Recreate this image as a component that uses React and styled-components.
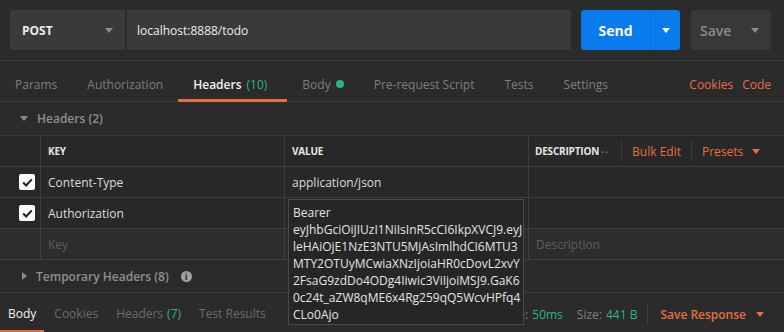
import React from 'react';
import styled, { createGlobalStyle } from 'styled-components';

const GlobalStyle = createGlobalStyle`
    html, body {
        margin: 0;
        padding: 0;
        background: #2b2b2b;
    }
    body {
        font-family: "Open Sans", "Noto Sans", sans-serif;
        -webkit-font-smoothing: antialiased;
    }
`;

const ORANGE = '#e5703f';
const GREEN = '#2fb383';
const LINE = '#3e3e3e';

const Page = styled.div`
    position: relative;
    width: 784px;
    height: 332px;
    overflow: hidden;
    background: #2b2b2b;
    color: #d8d8d8;
    font-size: 12px;
`;

const TopBar = styled.div`
    display: flex;
    height: 40px;
    padding: 10px 13px 10px 10px;
    border-bottom: 1px solid ${LINE};
`;

const Method = styled.div`
    display: flex;
    align-items: center;
    justify-content: space-between;
    width: 115px;
    padding: 0 12px 0 12px;
    box-sizing: border-box;
    background: #3a3a3a;
    border-radius: 3px 0 0 3px;
    color: #ececec;
    font-weight: 700;
    font-size: 12px;
`;

const Url = styled.div`
    flex: 1;
    display: flex;
    align-items: center;
    margin-left: 2px;
    padding-left: 10px;
    background: #3a3a3a;
    border-radius: 0 3px 3px 0;
    color: #ececec;
    font-size: 12px;
`;

const Caret = styled.span`
    width: 0;
    height: 0;
    border-left: 4px solid transparent;
    border-right: 4px solid transparent;
    border-top: 5px solid ${p => p.$color || '#8a8a8a'};
    display: inline-block;
`;

const SendButton = styled.div`
    display: flex;
    margin-left: 10px;
    width: 99px;
    background: #097bed;
    border-radius: 3px;
    color: #fff;
    font-weight: 700;
    font-size: 14px;
`;

const SendLabel = styled.div`
    flex: 1;
    display: flex;
    align-items: center;
    justify-content: center;
    border-right: 1px solid #0a6fd6;
`;

const SendArrow = styled.div`
    width: 29px;
    display: flex;
    align-items: center;
    justify-content: center;
`;

const SaveButton = styled.div`
    display: flex;
    align-items: center;
    justify-content: space-between;
    margin-left: 11px;
    width: 80px;
    padding: 0 12px 0 9px;
    box-sizing: border-box;
    background: #383838;
    border-radius: 3px;
    color: #8c8c8c;
    font-weight: 600;
    font-size: 14px;
`;

const TabBar = styled.div`
    display: flex;
    align-items: stretch;
    height: 40px;
    border-bottom: 1px solid ${LINE};
`;

const Tab = styled.div`
    display: flex;
    align-items: center;
    gap: 5px;
    padding: 8px ${p => (p.$active ? '20px' : '15px')} 0 15px;
    color: ${p => (p.$active ? '#f2f2f2' : '#7e7e7e')};
    font-weight: ${p => (p.$active ? 600 : 400)};
    border-bottom: 3px solid ${p => (p.$active ? ORANGE : 'transparent')};
    margin-bottom: -1px;
    white-space: nowrap;
`;

const Count = styled.span`
    color: ${GREEN};
    font-weight: 400;
`;

const Dot = styled.span`
    width: 8px;
    height: 8px;
    border-radius: 50%;
    background: ${GREEN};
    display: inline-block;
`;

const TabLinks = styled.div`
    margin-left: auto;
    display: flex;
    align-items: center;
    gap: 9px;
    padding: 6px 13px 0 0;
    color: ${ORANGE};
`;

const SectionTitle = styled.div`
    display: flex;
    align-items: center;
    gap: 9px;
    height: 33px;
    padding-left: 20px;
    color: #8f8f8f;
    font-weight: 600;
    border-bottom: 1px solid ${LINE};
`;

const Arrow = styled.span`
    width: 0;
    height: 0;
    display: inline-block;
    ${p => (p.$open
        ? `border-left: 4px solid transparent; border-right: 4px solid transparent; border-top: 5px solid #8a8a8a;`
        : `border-top: 4px solid transparent; border-bottom: 4px solid transparent; border-left: 5px solid #8a8a8a;`)}
`;

const Row = styled.div`
    display: grid;
    grid-template-columns: 40px 244px 244px 1fr;
    height: 30px;
    border-bottom: 1px solid ${LINE};
    background: ${p => (p.$tint ? '#2d2d2d' : '#282828')};
`;

const Cell = styled.div`
    display: flex;
    align-items: center;
    padding-left: ${p => p.$pad ?? 7}px;
    border-left: ${p => (p.$noLine ? 'none' : `1px solid ${LINE}`)};
    color: ${p => (p.$muted ? '#5e5e5e' : '#dcdcdc')};
    white-space: nowrap;
    overflow: hidden;
`;

const HeadCell = styled(Cell)`
    font-size: 10px;
    font-weight: 700;
    color: #e6e6e6;
    letter-spacing: -0.2px;
`;

const CheckCell = styled.div`
    display: flex;
    align-items: center;
    justify-content: flex-end;
    padding-right: 5px;
`;

const Check = styled.div`
    width: 16px;
    height: 16px;
    border-radius: 2px;
    background: #fafafa;
    display: flex;
    align-items: center;
    justify-content: center;
`;

const HeadTools = styled.div`
    display: flex;
    align-items: center;
    border-left: 1px solid ${LINE};
    padding-left: 6px;
    white-space: nowrap;
`;

const Dots = styled.span`
    color: #7a7a7a;
    font-size: 8px;
    letter-spacing: 1px;
    margin-left: 2px;
`;

const ToolLink = styled.span`
    display: flex;
    align-items: center;
    gap: 9px;
    color: ${ORANGE};
    font-size: 12px;
    padding: 0 10px;
    height: 20px;
    border-left: 1px solid ${LINE};
    margin-left: ${p => (p.$first ? '12px' : '0')};
`;

const TempHeaders = styled.div`
    display: flex;
    align-items: center;
    gap: 9px;
    height: 32px;
    padding-left: 22px;
    color: #8f8f8f;
    font-weight: 600;
    border-bottom: 1px solid ${LINE};
`;

const Info = styled.span`
    width: 11px;
    height: 11px;
    border-radius: 50%;
    background: #a0a0a0;
    color: #2b2b2b;
    font-size: 9px;
    font-weight: 700;
    display: inline-flex;
    align-items: center;
    justify-content: center;
    margin-left: 3px;
`;

const BottomBar = styled.div`
    display: flex;
    align-items: stretch;
    height: 40px;
`;

const BottomTab = styled.div`
    display: flex;
    align-items: center;
    gap: 4px;
    padding: 4px 8px 0 8px;
    margin-right: 2px;
    color: ${p => (p.$active ? '#f2f2f2' : '#6c6c6c')};
    border-bottom: 3px solid ${p => (p.$active ? ORANGE : 'transparent')};
    white-space: nowrap;
`;

const Stats = styled.div`
    margin-left: auto;
    display: flex;
    align-items: center;
    gap: 4px;
    padding-right: 20px;
    padding-top: 2px;
    color: #808080;
    white-space: nowrap;
`;

const Stat = styled.span`
    color: ${GREEN};
    margin-right: ${p => p.$after ?? 10}px;
`;

const SaveResponse = styled.span`
    display: flex;
    align-items: center;
    gap: 10px;
    color: ${ORANGE};
    font-weight: 600;
    border-left: 1px solid ${LINE};
    padding-left: 12px;
    height: 22px;
`;

const ValuePopup = styled.div`
    position: absolute;
    left: 288px;
    top: 199px;
    width: 236px;
    height: 126px;
    box-sizing: border-box;
    padding: 4px 0 0 4px;
    background: #262626;
    border: 1px solid #4a4a4a;
    color: #e4e4e4;
    font-size: 12px;
    line-height: 17px;
    white-space: nowrap;
    overflow: hidden;
`;

const tokenLines = [
    'Bearer',
    'eyJhbGciOiJIUzI1NiIsInR5cCI6IkpXVCJ9.eyJ',
    'leHAiOjE1NzE3NTU5MjAsImlhdCI6MTU3',
    'MTY2OTUyMCwiaXNzIjoiaHR0cDovL2xvY',
    '2FsaG9zdDo4ODg4Iiwic3ViIjoiMSJ9.GaK6',
    '0c24t_aZW8qME6x4Rg259qQ5WcvHPfq4',
    'CLo0Ajo',
];

function CheckIcon() {
    return (
        <svg width="11" height="9" viewBox="0 0 11 9">
            <path d="M1.2 4.6 L4.1 7.4 L9.8 1.4" fill="none" stroke="#222" strokeWidth="2.1" />
        </svg>
    );
}

function HeaderRow({ name, value, placeholder }) {
    if (placeholder) {
        return (
            <Row $tint>
                <CheckCell />
                <Cell $muted>Key</Cell>
                <Cell $muted />
                <Cell $muted>Description</Cell>
            </Row>
        );
    }
    return (
        <Row>
            <CheckCell>
                <Check><CheckIcon /></Check>
            </CheckCell>
            <Cell>{name}</Cell>
            <Cell>{value}</Cell>
            <Cell />
        </Row>
    );
}

export default function App() {
    return (
        <Page>
            <GlobalStyle />
            <TopBar>
                <Method>POST <Caret /></Method>
                <Url>localhost:8888/todo</Url>
                <SendButton>
                    <SendLabel>Send</SendLabel>
                    <SendArrow><Caret $color="#fff" /></SendArrow>
                </SendButton>
                <SaveButton>Save <Caret /></SaveButton>
            </TopBar>

            <TabBar>
                <Tab>Params</Tab>
                <Tab>Authorization</Tab>
                <Tab $active>Headers <Count>(10)</Count></Tab>
                <Tab>Body <Dot /></Tab>
                <Tab>Pre-request Script</Tab>
                <Tab>Tests</Tab>
                <Tab>Settings</Tab>
                <TabLinks>
                    <span>Cookies</span>
                    <span>Code</span>
                </TabLinks>
            </TabBar>

            <SectionTitle><Arrow $open /> Headers (2)</SectionTitle>

            <Row>
                <CheckCell />
                <HeadCell>KEY</HeadCell>
                <HeadCell>VALUE</HeadCell>
                <HeadTools>
                    <HeadCell $noLine $pad={0}>DESCRIPTION</HeadCell>
                    <Dots>••</Dots>
                    <ToolLink $first>Bulk Edit</ToolLink>
                    <ToolLink>Presets <Caret $color={ORANGE} /></ToolLink>
                </HeadTools>
            </Row>
            <HeaderRow name="Content-Type" value="application/json" />
            <HeaderRow name="Authorization" value="" />
            <HeaderRow placeholder />

            <TempHeaders><Arrow /> Temporary Headers (8) <Info>i</Info></TempHeaders>

            <BottomBar>
                <BottomTab $active>Body</BottomTab>
                <BottomTab>Cookies</BottomTab>
                <BottomTab>Headers <Count>(7)</Count></BottomTab>
                <BottomTab>Test Results</BottomTab>
                <Stats>
                    Time: <Stat>50ms</Stat>
                    Size: <Stat $after={6}>441 B</Stat>
                    <SaveResponse>Save Response <Caret $color={ORANGE} /></SaveResponse>
                </Stats>
            </BottomBar>

            <ValuePopup>
                {tokenLines.map(line => <div key={line}>{line}</div>)}
            </ValuePopup>
        </Page>
    );
}
